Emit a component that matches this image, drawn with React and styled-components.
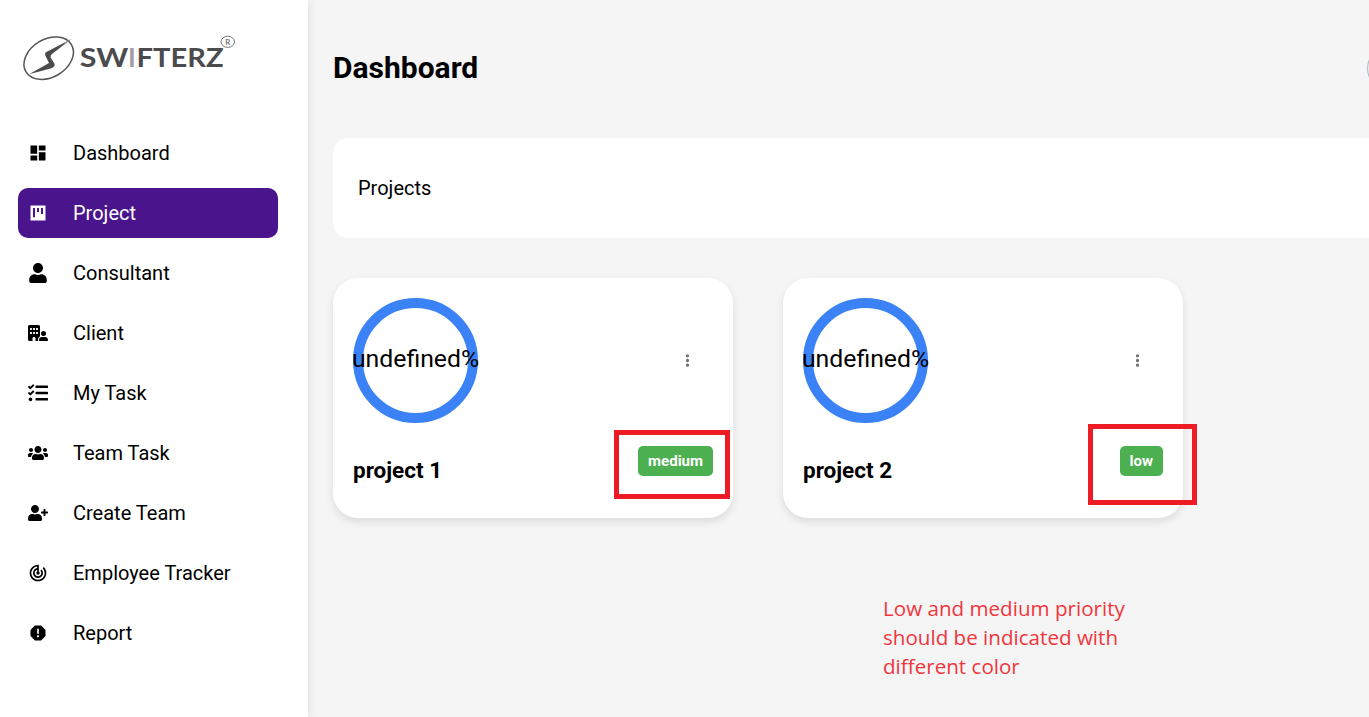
import React from "react";
import styled, { createGlobalStyle } from "styled-components";
import { MdDashboard, MdTrackChanges, MdReport } from "react-icons/md";
import { FaUser, FaTasks, FaUsers, FaUserPlus } from "react-icons/fa";
import { FaBuildingUser, FaEllipsisVertical } from "react-icons/fa6";

const GlobalStyle = createGlobalStyle`
  * { box-sizing: border-box; }
  body { margin: 0; overflow: hidden; background: #f5f5f5; color: #000; font-family: Roboto, "Liberation Sans", sans-serif; }
  h1, h2, p { margin: 0; }
`;

const Page = styled.div`
  position: relative;
  display: flex;
  width: 100%;
  height: 717px;
  overflow: hidden;
`;

const Sidebar = styled.aside`
  flex: 0 0 308px;
  height: 100%;
  padding: 30px 30px 0 18px;
  background: #fff;
  box-shadow: 0 0 10px rgba(0, 0, 0, 0.1);
`;

const LogoMark = styled.svg`
  display: block;
  width: 222px;
  height: 55px;
  margin-bottom: 43px;
`;

const Nav = styled.nav`
  display: flex;
  flex-direction: column;
  gap: 10px;
`;

const NavItem = styled.a`
  display: flex;
  align-items: center;
  gap: 25px;
  height: 50px;
  padding: 0 10px;
  border-radius: 10px;
  font-size: 20px;
  color: ${(p) => (p.$active ? "#fff" : "#000")};
  background: ${(p) => (p.$active ? "#4a148c" : "transparent")};

  svg { flex: 0 0 20px; width: 20px; height: 20px; }
`;

const Main = styled.main`
  flex: 1;
  min-width: 0;
  padding: 45px 0 0 25px;
  overflow: hidden;
`;

const Header = styled.header`
  display: flex;
  align-items: center;
  justify-content: space-between;
  width: 1079px;
  height: 46px;
`;

const Heading = styled.h1`
  font-size: 30px;
  font-weight: 700;
  line-height: 46px;
`;

const Avatar = styled.div`
  width: 45px;
  height: 45px;
  border: 1px solid #a9b8c2;
  border-radius: 50%;
  background: #e9eef1;
`;

const TitleBar = styled.section`
  display: flex;
  align-items: center;
  width: 1100px;
  height: 100px;
  margin-top: 47px;
  padding: 0 25px;
  border-radius: 15px;
  background: #fff;
  font-size: 20px;
`;

const Cards = styled.section`
  display: flex;
  gap: 50px;
  margin-top: 40px;
`;

const Card = styled.article`
  display: flex;
  flex: 0 0 400px;
  flex-direction: column;
  height: 240px;
  padding: 20px;
  border-radius: 25px;
  background: #fff;
  box-shadow: 0 4px 8px rgba(0, 0, 0, 0.1);
`;

const CardTop = styled.div`
  display: flex;
  align-items: center;
  justify-content: space-between;
  padding-right: 17.5px;
  color: #707070;
`;

const Ring = styled.div`
  display: flex;
  align-items: center;
  justify-content: center;
  width: 125px;
  height: 125px;
  padding-bottom: 5px;
  border: 10px solid #3b82f6;
  border-radius: 50%;
  color: #000;
  font-size: 24.8px;
  line-height: 29px;
`;

const CardBottom = styled.div`
  display: flex;
  align-items: flex-start;
  justify-content: space-between;
  margin-top: 23px;
`;

const CardTitle = styled.h2`
  padding-top: 10px;
  font-size: 22.5px;
  font-weight: 700;
  line-height: 28px;
`;

const Badge = styled.span`
  height: 30px;
  padding: 0 10px;
  border-radius: 5px;
  background: #4caf50;
  color: #fff;
  font-size: 15px;
  font-weight: 700;
  line-height: 30px;
`;

const MenuButton = styled.span`
  display: flex;
  width: 16px;
  justify-content: center;
`;

const Marker = styled.div`
  position: absolute;
  left: ${(p) => p.$x}px;
  top: ${(p) => p.$y}px;
  width: ${(p) => p.$w}px;
  height: ${(p) => p.$h}px;
  border: 5px solid #ed1c24;
`;

const Note = styled.p`
  position: absolute;
  left: 883px;
  top: 594px;
  color: #f2353c;
  font-family: "Open Sans", "Noto Sans", sans-serif;
  font-size: 20.6px;
  line-height: 29.2px;
  white-space: nowrap;
`;

function BoardIcon() {
  return (
    <svg viewBox="0 0 24 24" fill="currentColor">
      <path fillRule="evenodd" d="M3 3h18v18H3zM6 6v11h2.4V6zM10.8 6v4.8h2.4V6zM15.6 6v7.2H18V6z" />
    </svg>
  );
}

const NAV = [
  ["Dashboard", MdDashboard],
  ["Project", BoardIcon],
  ["Consultant", FaUser],
  ["Client", FaBuildingUser],
  ["My Task", FaTasks],
  ["Team Task", FaUsers],
  ["Create Team", FaUserPlus],
  ["Employee Tracker", MdTrackChanges],
  ["Report", MdReport],
];

const PROJECTS = [
  { name: "project 1", priority: "medium" },
  { name: "project 2", priority: "low" },
];

function Logo() {
  return (
    <LogoMark viewBox="18 30 222 55">
      <ellipse cx="48.7" cy="58.2" rx="26.5" ry="19" transform="rotate(-31 48.7 58.2)" fill="none" stroke="#555" strokeWidth="1.5" />
      <path d="M71 39.3 46.8 51.8Q44.2 53.2 45.4 55.8L49 63 29 74.2 51.5 68.2Q55.8 66.5 54.4 63.6L50.6 57.6Q50.3 55.4 52 54Z" fill="#4b4b4d" />
      <path d="M63 43.2 72 38.4 66 43.2Z" fill="#999" />
      <g fontFamily="Lato, sans-serif" fontWeight="700" fontSize="26.2" fill="#4b4b4d">
        <text x="79.8" y="67.3" textLength="48.6" lengthAdjust="spacingAndGlyphs">SW</text>
        <text x="127.9" y="67.3" fill="#a0a0a0">I</text>
        <text x="136.6" y="67.3" textLength="87" lengthAdjust="spacingAndGlyphs">FTERZ</text>
      </g>
      <ellipse cx="227.8" cy="41.8" rx="6.8" ry="5.6" fill="none" stroke="#777" strokeWidth="1" />
      <text x="225.2" y="44.6" fontFamily="Lato, sans-serif" fontWeight="700" fontSize="7.8" fill="#777">R</text>
    </LogoMark>
  );
}

export default function App() {
  return (
    <Page>
      <GlobalStyle />
      <Sidebar>
        <Logo />
        <Nav>
          {NAV.map(([label, Icon]) => (
            <NavItem key={label} $active={label === "Project"}>
              <Icon />
              {label}
            </NavItem>
          ))}
        </Nav>
      </Sidebar>
      <Main>
        <Header>
          <Heading>Dashboard</Heading>
          <Avatar />
        </Header>
        <TitleBar>Projects</TitleBar>
        <Cards>
          {PROJECTS.map((p) => (
            <Card key={p.name}>
              <CardTop>
                <Ring>undefined%</Ring>
                <MenuButton>
                  <FaEllipsisVertical size={15} />
                </MenuButton>
              </CardTop>
              <CardBottom>
                <CardTitle>{p.name}</CardTitle>
                <Badge>{p.priority}</Badge>
              </CardBottom>
            </Card>
          ))}
        </Cards>
      </Main>
      <Marker $x={614} $y={430} $w={116} $h={69} />
      <Marker $x={1088} $y={424} $w={109} $h={81} />
      <Note>
        Low and medium priority
        <br />
        should be indicated with
        <br />
        different color
      </Note>
    </Page>
  );
}
